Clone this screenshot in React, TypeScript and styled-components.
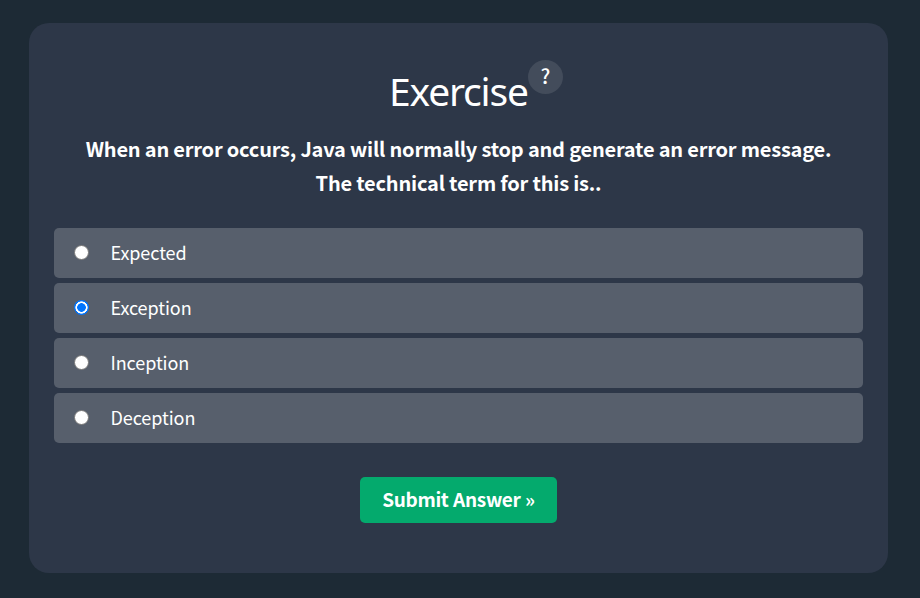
import { useState } from "react";
import styled, { createGlobalStyle } from "styled-components";

const Global = createGlobalStyle`
  * { box-sizing: border-box; }
  body { margin: 0; background: #1d2a35; }
`;
const Page = styled.main`
  min-height: 598px;
  padding: 23px 32px 25px 29px;
  font-family: "Noto Sans CJK SC", "Noto Sans", sans-serif;
  color: #fff;
`;
const Card = styled.form`
  height: 550px;
  padding: 36px 25px 0;
  border-radius: 20px;
  background: #2d3748;
  display: flex;
  flex-direction: column;
  align-items: center;
`;
const Heading = styled.header`
  display: flex;
  align-items: flex-start;
  height: 73px;
  margin-left: 35px;
`;
const Title = styled.h2`
  margin: 6px 0 0;
  font: 400 39px/52px "Noto Sans", sans-serif;
  letter-spacing: -1.2px;
  width: 139px;
  white-space: nowrap;
`;
const Help = styled.button`
  width: 35px;
  height: 34px;
  margin-top: 1px;
  padding: 0 0 2px;
  border: 0;
  border-radius: 50%;
  background: #434c5b;
  color: #fff;
  font: 500 20px/32px "Noto Sans CJK SC", sans-serif;
`;
const Question = styled.p`
  margin: 0;
  height: 96px;
  font-weight: 700;
  font-size: 20px;
  letter-spacing: -0.2px;
  line-height: 34px;
  text-align: center;
  white-space: nowrap;
`;
const Options = styled.div`
  display: grid;
  gap: 5px;
  width: 100%;
`;
const Option = styled.label`
  height: 50px;
  padding: 0 0 1px 20px;
  border-radius: 5px;
  background: #575f6c;
  display: flex;
  align-items: center;
  gap: 21.5px;
  font-size: 18px;
  letter-spacing: -0.08px;
`;
const Radio = styled.input`
  appearance: none;
  width: 15px;
  height: 15px;
  margin: 0;
  border: 1px solid #767676;
  border-radius: 50%;
  background: #fff;

  &:checked {
    border: 0;
    background: radial-gradient(
      circle,
      #0075ff 4px,
      #fff 4.6px,
      #fff 5.8px,
      #0075ff 6.4px
    );
  }
`;
const AnswerText = styled.span`
  padding-bottom: 2px;
`;
const Submit = styled.button`
  margin-top: 34px;
  width: 197px;
  height: 46px;
  border: 0;
  border-radius: 5px;
  background: #04aa6d;
  color: #fff;
  font: 700 19px/44px "Noto Sans CJK SC", sans-serif;
  letter-spacing: -0.33px;
  word-spacing: 0.6px;
  padding: 0 0 2px;
`;
const answers = ["Expected", "Exception", "Inception", "Deception"];

export default function App() {
  const [selected, setSelected] = useState("Exception");
  return (
    <Page>
      <Global />
      <Card onSubmit={(e) => e.preventDefault()}>
        <Heading><Title>Exercise</Title><Help type="button">?</Help></Heading>
        <Question>When an error occurs, Java will normally stop and generate an error message.<br />The technical term for this is..</Question>
        <Options>
          {answers.map((a) => (
            <Option key={a}>
              <Radio type="radio" name="answer" checked={selected === a} onChange={() => setSelected(a)} />
              <AnswerText>{a}</AnswerText>
            </Option>
          ))}
        </Options>
        <Submit>Submit Answer »</Submit>
      </Card>
    </Page>
  );
}
